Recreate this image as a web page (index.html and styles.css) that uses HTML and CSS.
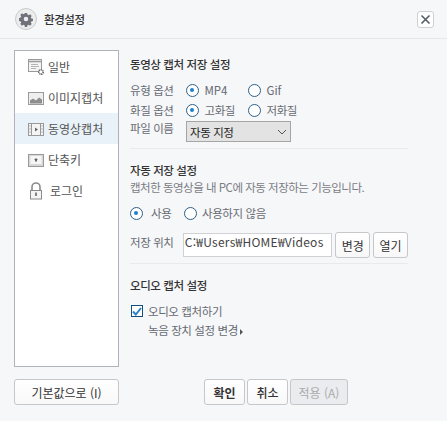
FILE: index.html
```html
<!DOCTYPE html>
<html lang="ko">
<head>
  <meta charset="UTF-8">
  <title>환경설정</title>
  <link rel="stylesheet" href="styles.css">
</head>
<body>
  <div class="wrap">
    <div class="title_bar">
      <div class="title_icon">
        <svg width="18" height="18" viewBox="0 0 18 18"><path fill="#6f727a" d="M7.600 1.500h2.800l.4 2 1.500.7 1.800-1.100 2 2-1.100 1.800.7 1.500 2 .4v2.800l-2 .4-.7 1.500 1.100 1.800-2 2-1.800-1.100-1.500.7-.4 2H7.600l-.4-2-1.500-.7-1.800 1.100-2-2 1.100-1.800-.7-1.500-2-.4V7.600l2-.4.7-1.500-1.100-1.800 2-2 1.800 1.100 1.500-.7z" transform="translate(1.800 1.800) scale(.8)"/><circle cx="9" cy="9" r="2.300" fill="#eceded"/></svg>
      </div>
      <span class="title_text">환경설정</span>
      <button class="close_btn">
        <svg width="11" height="11" viewBox="0 0 11 11"><path d="M1.500 1.500l8 8M9.500 1.500l-8 8" stroke="#555a68" stroke-width="1.600" fill="none"/></svg>
      </button>
    </div>

    <div class="main">
      <ul class="menu">
        <li class="menu_item">
          <svg width="17" height="18" viewBox="0 0 17 18"><rect x=".5" y="1.500" width="13" height="12" fill="#f4f4f4" stroke="#9a9a9a"/><path d="M1 3.500h12" stroke="#9a9a9a" stroke-width="1.500"/><path d="M3 6.500h7M3 8.500h8M3 10.500h5" stroke="#b5b5b5"/><circle cx="13" cy="14" r="2.200" fill="#fff" stroke="#666" stroke-width="1.600" stroke-dasharray="1.200 .6"/></svg>
          <span>일반</span>
        </li>
        <li class="menu_item">
          <svg width="17" height="18" viewBox="0 0 17 18"><rect x=".5" y="3.500" width="15" height="12" fill="#eee" stroke="#9a9a9a"/><path d="M2 14.500v-3l3-2 3 2 3-3 3 2v4z" fill="#8e8e8e"/></svg>
          <span>이미지캡처</span>
        </li>
        <li class="menu_item on">
          <svg width="17" height="18" viewBox="0 0 17 18"><rect x=".5" y="3.500" width="15" height="12" fill="#f4f4f4" stroke="#9a9a9a"/><path d="M3.500 3.500v12M12.500 3.500v12" stroke="#9a9a9a"/><path d="M2 5.500v1M2 8.500v1M2 11.500v1M14 5.500v1M14 8.500v1M14 11.500v1" stroke="#888"/><path d="M7 7.500l3 2-3 2z" fill="#666"/></svg>
          <span>동영상캡처</span>
        </li>
        <li class="menu_item">
          <svg width="17" height="18" viewBox="0 0 17 18"><rect x=".5" y="3.500" width="15" height="12" fill="#d8d8d8" stroke="#999"/><rect x="2.500" y="5" width="11" height="8" fill="#f6f6f6"/><path d="M8 7l2 2H9v1.500H7V9H6z" fill="#666"/></svg>
          <span>단축키</span>
        </li>
        <li class="menu_item">
          <svg width="17" height="18" viewBox="0 0 17 18"><path d="M4 8V5a4 4 0 0 1 8 0v3" fill="none" stroke="#8a8a8a" stroke-width="1.600"/><rect x="2.500" y="8.500" width="11" height="8.500" fill="#f4f4f4" stroke="#8a8a8a"/><path d="M8 10.500v3.500" stroke="#666" stroke-width="1.600"/></svg>
          <span class="menu_last">로그인</span>
        </li>
      </ul>

      <div class="content">
        <div class="section sec1">
          <h3 class="sec_title">동영상 캡처 저장 설정</h3>
          <div class="row">
            <label class="row_label">유형 옵션</label>
            <span class="radio on"></span><span class="opt opt1 latin">MP4</span>
            <span class="radio"></span><span class="opt latin">Gif</span>
          </div>
          <div class="row">
            <label class="row_label">화질 옵션</label>
            <span class="radio on"></span><span class="opt opt1">고화질</span>
            <span class="radio"></span><span class="opt">저화질</span>
          </div>
          <div class="row name_row">
            <label class="row_label">파일 이름</label>
            <div class="select">
              <span>자동 지정</span>
              <svg width="10" height="6" viewBox="0 0 10 6"><path d="M1 1l4 4 4-4" fill="none" stroke="#555" stroke-width="1"/></svg>
            </div>
          </div>
        </div>

        <div class="section sec2">
          <h3 class="sec_title">자동 저장 설정</h3>
          <p class="desc">캡처한 동영상을 내 PC에 자동 저장하는 기능입니다.</p>
          <div class="row use_row">
            <span class="radio on"></span><span class="opt use_opt">사용</span>
            <span class="radio"></span><span class="opt off_opt">사용하지 않음</span>
          </div>
          <div class="row path_row">
            <label class="row_label">저장 위치</label>
            <div class="path_input">C:₩Users₩HOME₩Videos</div>
            <button class="btn small_btn">변경</button>
            <button class="btn small_btn">열기</button>
          </div>
        </div>

        <div class="section sec3">
          <h3 class="sec_title">오디오 캡처 설정</h3>
          <div class="check_row">
            <span class="check">
              <svg width="10" height="9" viewBox="0 0 10 9"><path d="M1 4.500l2.800 3L9 1" fill="none" stroke="#2a82c8" stroke-width="2"/></svg>
            </span>
            <span class="opt">오디오 캡처하기</span>
          </div>
          <div class="device_link">녹음 장치 설정 변경<i class="arrow"></i></div>
        </div>
      </div>
    </div>

    <div class="footer">
      <button class="btn default_btn">기본값으로 (I)</button>
      <div class="footer_right">
        <button class="btn ok_btn">확인</button>
        <button class="btn cancel_btn">취소</button>
        <button class="btn apply_btn" disabled>적용 (A)</button>
      </div>
    </div>
  </div>
</body>
</html>
```

FILE: styles.css
```css
* {box-sizing: border-box;}

body {
  margin: 0;
  background: #f6f7f9;
  font-family: 'Noto Sans CJK KR', 'Noto Sans', sans-serif;
  font-size: 11.5px;
  letter-spacing: -.4px;
  color: #666a72;
}

.wrap {
  width: 447px;
  height: 421px;
  display: flex;
  flex-direction: column;
  overflow: hidden;
}

.title_bar {
  height: 39px;
  padding: 0 13px 0 15px;
  display: flex;
  align-items: center;
  border-bottom: 1px solid #e6e7ea;
}
.title_icon {
  width: 22px;
  height: 22px;
  border-radius: 50%;
  border: 1px solid #c9cacd;
  background: #eceded;
  display: flex;
  align-items: center;
  justify-content: center;
}
.title_text {
  margin-left: 7px;
  font-weight: 500;
  color: #333;
}
.close_btn {
  margin-left: auto;
  width: 17px;
  height: 17px;
  padding: 0;
  background: #fff;
  border: 1px solid #cfd0d4;
  border-radius: 3px;
  display: flex;
  align-items: center;
  justify-content: center;
}

.main {
  display: flex;
  height: 329px;
  padding: 11px 0 0 14px;
}

.menu {
  width: 105px;
  height: 317px;
  margin: 0;
  padding: 0;
  list-style: none;
  background: #fff;
  border: 1px solid #b0b4ba;
}
.menu_item {
  height: 31px;
  padding-left: 13px;
  display: flex;
  align-items: center;
  gap: 3px;
  font-size: 12px;
  letter-spacing: 0;
  color: #555;
}
.menu_item.on {background: #e9f2f9;}
.menu_last {margin-left: 2px;}

.content {
  width: 278px;
  margin-left: 11px;
}

.section {border-bottom: 1px solid #e9eaed;}
.sec1 {height: 99px; padding-top: 5px;}
.sec2 {height: 115px; padding-top: 12px;}
.sec3 {border-bottom: 0; padding-top: 12px;}

.sec_title {
  margin: 0;
  height: 18px;
  line-height: 18px;
  font-size: 11.5px;
  font-weight: 500;
  color: #333;
}

.row {
  display: flex;
  align-items: center;
  height: 20px;
}
.sec1 .sec_title {margin-bottom: 7px;}
.row_label {width: 56px; color: #666a72;}
.name_row {
  align-items: flex-start;
  height: 21px;
  margin-top: 1px;
}
.name_row .row_label {line-height: 14px;}

.radio {
  position: relative;
  width: 13px;
  height: 13px;
  border: 1.500px solid #2f5f86;
  border-radius: 50%;
  background: #fff;
}
.radio.on::after {
  content: '';
  position: absolute;
  top: 3px;
  left: 3px;
  width: 4px;
  height: 4px;
  border-radius: 50%;
  background: #1f80c8;
}
.opt {margin-left: 5.500px; color: #666a72;}
.opt1 {width: 43.500px;}
.latin {letter-spacing: 0;}

.select {
  width: 105px;
  height: 21px;
  padding: 0 3px;
  display: flex;
  align-items: center;
  justify-content: space-between;
  background: #e3e3e3;
  border: 1px solid #a5a5a5;
  color: #222;
}

.desc {
  margin: 0;
  height: 16px;
  line-height: 16px;
  letter-spacing: -.5px;
  color: #7a7d84;
}
.use_row {margin-top: 7px; height: 22px;}
.use_opt {width: 33px; margin-left: 8px;}
.off_opt {margin-left: 5px;}

.path_row {
  margin-top: 8px;
  height: 26px;
}
.path_row .row_label {width: 53px; margin-bottom: 6px;}
.path_input {
  width: 150px;
  height: 24px;
  padding: 0 1px;
  line-height: 15px;
  font-size: 12px;
  letter-spacing: .25px;
  background: #fff;
  border: 1px solid #d0d1d4;
  color: #444;
  white-space: nowrap;
  overflow: hidden;
}

.btn {
  height: 26px;
  padding: 0;
  background: linear-gradient(#fff, #f8f8f9);
  border: 1px solid #c6c7cb;
  border-radius: 3px;
  font-family: inherit;
  font-size: 12px;
  color: #333;
}
.small_btn {width: 35px; margin-left: 3px;}

.check_row {
  display: flex;
  align-items: center;
  margin-top: 7px;
  height: 20px;
}
.check {
  width: 12px;
  height: 12px;
  margin-left: 1px;
  border: 1px solid #174d7c;
  background: #fff;
  display: flex;
  align-items: center;
  justify-content: center;
}
.check_row .opt {margin-left: 5px;}
.device_link {
  margin-left: 18px;
  line-height: 18px;
  color: #666a72;
}
.arrow {
  display: inline-block;
  margin-left: 2px;
  border-left: 3px solid #555;
  border-top: 3px solid transparent;
  border-bottom: 3px solid transparent;
}

.footer {
  padding: 11px 0 0 14px;
  display: flex;
}
.default_btn {width: 105px;}
.footer_right {
  margin-left: 85px;
  display: flex;
  gap: 2px;
}
.ok_btn {width: 41px; font-weight: 700;}
.cancel_btn {width: 41px; font-weight: 500;}
.apply_btn {
  width: 58px;
  background: #ebecef;
  color: #aaa;
}
```
